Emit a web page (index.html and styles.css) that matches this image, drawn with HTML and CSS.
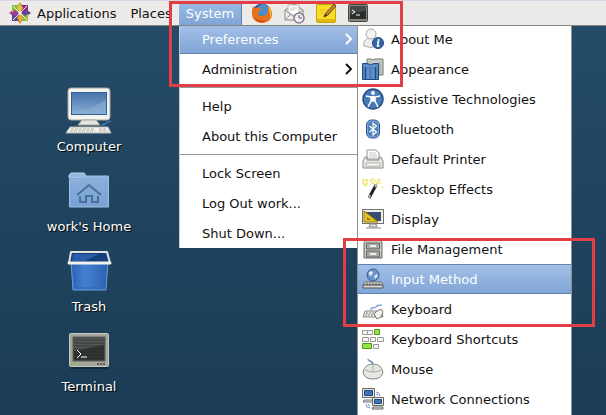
FILE: index.html
```
<!DOCTYPE html>
<html lang="en">
<head>
    <meta charset="UTF-8">
    <meta name="viewport" content="width=device-width, initial-scale=1.0">
    <title>Desktop</title>
    <link rel="stylesheet" href="styles.css">
</head>
<body>
    <div class="desktop">
        <header class="panel">
            <button type="button" class="panel-menu panel-apps">
                <svg class="icon" viewBox="0 0 22 22">
                    <path d="M11 0l3 4h-6z" fill="#c9a83a"/>
                    <path d="M22 11l-4 3v-6z" fill="#6c3f96"/>
                    <path d="M11 22l-3-4h6z" fill="#e0972e"/>
                    <path d="M0 11l4-3v6z" fill="#a84a9c"/>
                    <rect x="3" y="3" width="7" height="7" fill="#8fbf3a"/>
                    <rect x="12" y="3" width="7" height="7" fill="#8c2f85"/>
                    <rect x="3" y="12" width="7" height="7" fill="#5a4796"/>
                    <rect x="12" y="12" width="7" height="7" fill="#93b93d"/>
                    <path d="M11 2l3 4-3 4-3-4z" fill="#f3c13d"/>
                    <path d="M20 11l-4 3-4-3 4-3z" fill="#5b4699"/>
                    <path d="M11 20l-3-4 3-4 3 4z" fill="#f0a52c"/>
                    <path d="M2 11l4-3 4 3-4 3z" fill="#a63a92"/>
                    <path d="M4 4l14 14M18 4L4 18" stroke="#f3f1ee" stroke-width="1"/>
                </svg>
                Applications
            </button>
            <button type="button" class="panel-menu">Places</button>
            <button type="button" class="panel-menu open">System</button>
            <div class="launchers">
                <button type="button" class="launcher" aria-label="Web Browser">
                    <svg class="icon" viewBox="0 0 22 22">
                        <circle cx="11" cy="11" r="9.5" fill="#234f96"/>
                        <circle cx="12" cy="8" r="6" fill="#4b8ecb"/>
                        <path d="M2 4c1 1 1 2 2 2 1-1 3-1 4 0l2 1c0 2-2 2-3 3 0 3 2 4 5 4 3-1 5-2 5-6 0-2-1-3-2-4 4 1 6 4 6 8 0 5-4 9-10 9S1 17 1 12c0-3 0-5 1-8z" fill="#e8711c"/>
                        <path d="M17 4c4 3 4 8 2 12 0-4 0-8-2-12z" fill="#f9c536"/>
                        <path d="M3 14c2 4 7 6 12 4-3 3-10 3-12-4z" fill="#c4430f"/>
                    </svg>
                </button>
                <button type="button" class="launcher" aria-label="Mail">
                    <svg class="icon" viewBox="0 0 22 22">
                        <path d="M2 8l9-6 9 6v10H2z" fill="#eeeeec" stroke="#888a85"/>
                        <path d="M5 3h11v8l-5 4-6-4z" fill="#fff" stroke="#b5b6b1"/>
                        <path d="M7 6h7M7 8h5" stroke="#c5c6c1"/>
                        <path d="M2 8l9 6 9-6M2 18l6-6" fill="none" stroke="#999a95"/>
                        <circle cx="16" cy="16" r="5" fill="#f1eff3" stroke="#847b8c" stroke-width="1.5"/>
                        <path d="M16 13v3h3" fill="none" stroke="#6f477d"/>
                    </svg>
                </button>
                <button type="button" class="launcher" aria-label="Notes">
                    <svg class="icon" viewBox="0 0 22 22">
                        <rect x="1.500" y="2.500" width="19" height="18" rx="1" fill="#f7dc28" stroke="#c5a407"/>
                        <path d="M2 17h18v3H2z" fill="#dfb912"/>
                        <path d="M5 8h8M5 11h5" stroke="#e1be16"/>
                        <path d="M9 15l2-4 8-9 2 2-8 9z" fill="#c28439" stroke="#6d491b"/>
                        <path d="M9 15l1-3 2 1z" fill="#222"/>
                    </svg>
                </button>
                <button type="button" class="launcher" aria-label="Terminal">
                    <svg class="icon" viewBox="0 0 22 22">
                        <rect x="1.500" y="2.500" width="19" height="17" rx="1" fill="#85877f" stroke="#44463f"/>
                        <rect x="3" y="4" width="16" height="13" fill="#292d2c"/>
                        <path d="M3 4h16v5L3 12z" fill="#454a48"/>
                        <path d="M5 8l3 2-3 2M9 13h4" fill="none" stroke="#fff"/>
                    </svg>
                </button>
            </div>
        </header>

        <main class="shortcuts">
            <button type="button" class="shortcut">
                <svg class="icon-large" viewBox="0 0 48 48">
                    <path d="M6 1h36q3 0 3 3v26q0 3-3 3H6q-3 0-3-3V4q0-3 3-3z" fill="#f3f3ef" stroke="#a8a69c"/>
                    <rect x="6" y="5" width="36" height="23" fill="#315e97"/>
                    <rect x="7" y="6" width="34" height="21" fill="url(#screen)"/>
                    <path d="M7 24c14 0 24-4 34-12v15H7z" fill="#8db0d8" opacity=".5"/>
                    <path d="M17 33h14l4 5H13z" fill="#e5e5df" stroke="#aaa9a0"/>
                    <path d="M5 40h38l3 6H1z" fill="#f4f4f0" stroke="#b7b5ab"/>
                    <path d="M6 42h24M5 44h25M34 42h8M34 44h9" stroke="#aaa89f" stroke-dasharray="3 1"/>
                    <path d="M37 39c1-4 4-1 5-3s3-1 4-2" fill="none" stroke="#4378b1" stroke-width="1.500"/>
                    <defs>
                        <linearGradient id="screen" x1="0" y1="0" x2="0" y2="1">
                            <stop offset="0" stop-color="#4876ad"/>
                            <stop offset="1" stop-color="#89abd2"/>
                        </linearGradient>
                    </defs>
                </svg>
                <span>Computer</span>
            </button>
            <button type="button" class="shortcut">
                <svg class="icon-large" viewBox="0 0 48 48">
                    <path d="M4 8l2-2h13l4 5H4z" fill="#91b8e1" stroke="#b5d0ee"/>
                    <path d="M4.500 12h14l4-3h21v31h-39z" fill="url(#folder)" stroke="#a0c1e5"/>
                    <path d="M12 28l12-10 12 10M15 29v6h6v-6h6v6h6v-6" fill="none" stroke="#486f9d" stroke-width="2"/>
                    <defs>
                        <linearGradient id="folder" x1="0" y1="0" x2="0" y2="1">
                            <stop offset="0" stop-color="#8bb1dc"/>
                            <stop offset="1" stop-color="#78a2d2"/>
                        </linearGradient>
                    </defs>
                </svg>
                <span>work's Home</span>
            </button>
            <button type="button" class="shortcut">
                <svg class="icon-large" viewBox="0 0 48 48">
                    <path d="M6 15h37l-2 28H8z" fill="url(#bin)" stroke="#6f9cd6"/>
                    <path d="M6 5h36l3 11H4z" fill="#153e7d" stroke="#e3e4df" stroke-width="2" stroke-linejoin="round"/>
                    <path d="M8 7l-1 7h13l14-7z" fill="#2a5ca7"/>
                    <path d="M4 16h41" stroke="#f3f3ee" stroke-width="3" stroke-linecap="round"/>
                    <path d="M9 19l2 22h28l1-22" fill="none" stroke="#3365b5"/>
                    <defs>
                        <linearGradient id="bin" x1="0" y1="0" x2="1" y2="0">
                            <stop offset="0" stop-color="#2f67bb"/>
                            <stop offset=".4" stop-color="#447fce"/>
                            <stop offset="1" stop-color="#2b60b2"/>
                        </linearGradient>
                    </defs>
                </svg>
                <span>Trash</span>
            </button>
            <button type="button" class="shortcut">
                <svg class="icon-large" viewBox="0 0 48 48">
                    <path d="M5 41h38" stroke="#142b3d" stroke-width="2"/>
                    <rect x="4.500" y="6.500" width="39" height="33" rx="1" fill="#a4a59d" stroke="#c6c7bf"/>
                    <rect x="8" y="10" width="32" height="24" fill="#303533" stroke="#62655e"/>
                    <path d="M9 11h30v7L9 24z" fill="#515754"/>
                    <path d="M9 13h30M9 16h30M9 19h30M9 22h30M9 25h30M9 28h30M9 31h30" stroke="#252a28" opacity=".6"/>
                    <path d="M12 23l4 4-4 4M16 30h6" fill="none" stroke="#fff"/>
                    <path d="M8 37h3" stroke="#75c943" stroke-width="2"/>
                    <path d="M32 37h8" stroke="#5c5e57" stroke-width="2" stroke-dasharray="2 1"/>
                </svg>
                <span>Terminal</span>
            </button>
        </main>

        <nav class="menu system-menu" aria-label="System">
            <button type="button" class="menu-item selected">
                Preferences
                <svg class="arrow" viewBox="0 0 10 14"><path d="M2 2l5 5-5 5"/></svg>
            </button>
            <button type="button" class="menu-item">
                Administration
                <svg class="arrow" viewBox="0 0 10 14"><path d="M2 2l5 5-5 5"/></svg>
            </button>
            <hr>
            <button type="button" class="menu-item">Help</button>
            <button type="button" class="menu-item">About this Computer</button>
            <hr>
            <button type="button" class="menu-item">Lock Screen</button>
            <button type="button" class="menu-item">Log Out work...</button>
            <button type="button" class="menu-item">Shut Down...</button>
        </nav>

        <nav class="menu preferences-menu" aria-label="Preferences">
            <button type="button" class="menu-item">
                <svg class="icon" viewBox="0 0 22 22">
                    <path d="M2 18c-1-5 2-8 7-8s8 3 7 8q-7 3-14 0z" fill="#eeeeec" stroke="#aaaba7"/>
                    <circle cx="9" cy="6" r="5" fill="#f4f4f2" stroke="#aaaba7"/>
                    <circle cx="16" cy="15" r="5.500" fill="#3465a4" stroke="#204a87"/>
                    <circle cx="16.500" cy="12" r="1" fill="#fff"/>
                    <path d="M15 14h1.500l-1 4h2" fill="none" stroke="#fff" stroke-width="1.500"/>
                </svg>
                About Me
            </button>
            <button type="button" class="menu-item">
                <svg class="icon" viewBox="0 0 22 22">
                    <path d="M5 1h4q2 2 4 0h8v16H5z" fill="#c8cac5" stroke="#777973"/>
                    <path d="M8 4v10M18 4v12" stroke="#999b95"/>
                    <path d="M.5 5.500h5q3 3 6 0h5v16H.5z" fill="#4e80bd" stroke="#204a87"/>
                    <path d="M3.500 9v12M13.500 9v12" stroke="#204a87"/>
                    <path d="M6 10v11M11 10v11M1 8h15" stroke="#76a0d0"/>
                </svg>
                Appearance
            </button>
            <button type="button" class="menu-item">
                <svg class="icon" viewBox="0 0 22 22">
                    <circle cx="11" cy="11" r="10" fill="#4579b8" stroke="#274f88" stroke-width="1.500"/>
                    <circle cx="11" cy="5" r="2" fill="#fff"/>
                    <path d="M4 8l5 1v4l-3 6M18 8l-5 1v4l3 6M8 9h6M9 13h4" fill="none" stroke="#fff" stroke-width="1.500"/>
                    <path d="M9 8h4v5H9z" fill="#fff"/>
                </svg>
                Assistive Technologies
            </button>
            <button type="button" class="menu-item">
                <svg class="icon" viewBox="0 0 22 22">
                    <rect x="4.500" y="2" width="13" height="18" rx="5" fill="#4b80bb" stroke="#28578f"/>
                    <rect x="5.500" y="3" width="11" height="16" rx="4" fill="none" stroke="#83aad6"/>
                    <path d="M7.500 8l7 6-3.500 3V5l3.500 3-7 6" fill="none" stroke="#fff" stroke-width="1.200"/>
                </svg>
                Bluetooth
            </button>
            <button type="button" class="menu-item">
                <svg class="icon" viewBox="0 0 22 22">
                    <path d="M5 11V2h9l3 3v6z" fill="#fff" stroke="#959791"/>
                    <path d="M7 5h7M7 7h8M7 9h8" stroke="#c7c8c4"/>
                    <path d="M3 9h2v3h12V9h2l2 4v7H1v-7z" fill="#e8e9e5" stroke="#8a8c86"/>
                    <path d="M4 15h14v3H4z" fill="#fff" stroke="#aaaca6"/>
                </svg>
                Default Printer
            </button>
            <button type="button" class="menu-item">
                <svg class="icon" viewBox="0 0 22 22">
                    <path d="M1 2h4v4H1zM8 3l2-2 3 2-2 3zM15 2h4M15 5h4M16 1l-1 5M20 8l1 2M2 8l3-1" fill="none" stroke="#f1e878" stroke-width="1.500"/>
                    <path d="M7 20l7-13" stroke="#222" stroke-width="3"/>
                    <path d="M13 9l2-3M7 20l1-3" stroke="#b8b8b8" stroke-width="2"/>
                </svg>
                Desktop Effects
            </button>
            <button type="button" class="menu-item">
                <svg class="icon" viewBox="0 0 22 22">
                    <rect x=".5" y="1.500" width="21" height="14" fill="#eeeeec" stroke="#71736d"/>
                    <rect x="3" y="4" width="16" height="9" fill="#394d70"/>
                    <path d="M2 3l14 11H2z" fill="#e6c320" stroke="#9b7b08"/>
                    <path d="M5 9l4 3H5z" fill="#8d7218"/>
                    <path d="M8 16h6l1 3H7zM4 20h15" fill="#ddd" stroke="#8b8d86"/>
                </svg>
                Display
            </button>
            <button type="button" class="menu-item">
                <svg class="icon" viewBox="0 0 22 22">
                    <path d="M4 1h14l2 4v15H2V5z" fill="#c8cac4" stroke="#656760"/>
                    <path d="M4.500 5h13v6h-13zM4.500 13h13v6h-13z" fill="#a9aba4" stroke="#656760"/>
                    <path d="M8 8h6M8 16h6" stroke="#eee" stroke-width="2"/>
                </svg>
                File Management
            </button>
            <button type="button" class="menu-item selected">
                <svg class="icon" viewBox="0 0 22 22">
                    <circle cx="11" cy="7" r="6" fill="#6b95c8" stroke="#365d91"/>
                    <path d="M7 4l3-1 1 2-2 3-2-1zM12 8l3-2 1 2-3 3z" fill="#dce8f5"/>
                    <path d="M3 14h16l2 3H1z" fill="#e8e9e5" stroke="#666862"/>
                    <path d="M1 17h20v3H1z" fill="#d5d6d1" stroke="#555"/>
                    <path d="M4 16h14" stroke="#444" stroke-dasharray="2 1"/>
                </svg>
                Input Method
            </button>
            <button type="button" class="menu-item">
                <svg class="icon" viewBox="0 0 22 22">
                    <path d="M3 13h16l2 6H1z" fill="#e7e8e4" stroke="#888a84"/>
                    <path d="M4 15h10M3 17h11" stroke="#888a84" stroke-dasharray="2 1"/>
                    <path d="M9 12c0-4 4-1 5-3s3-2 6-2" fill="none" stroke="#86a9cf" stroke-width="1.500"/>
                    <path d="M12 16l3-3 4-2 2 3-2 5-4 2z" fill="#f3f2ef" stroke="#777"/>
                </svg>
                Keyboard
            </button>
            <button type="button" class="menu-item">
                <svg class="icon" viewBox="0 0 22 22">
                    <path d="M.5 2.500h10v4H.5zM5.500 2.500v4M.5 9.500h6v4h-6zM8.500 9.500h5v4h-5zM15.500 9.500h6v4h-6zM11.500 16.500h5v4h-5z" fill="#f5f5f3" stroke="#999b95"/>
                    <path d="M12.500 1.500h5v5h-5zM.5 15.500h9v5h-9z" fill="#95e34b" stroke="#4d9a13"/>
                </svg>
                Keyboard Shortcuts
            </button>
            <button type="button" class="menu-item">
                <svg class="icon" viewBox="0 0 22 22">
                    <path d="M6 1c0 3 5 1 5 6" fill="none" stroke="#7790ad" stroke-width="1.500"/>
                    <path d="M1 14q2-8 10-8t10 8q-1 7-10 7T1 14z" fill="#e6e7e4" stroke="#858781"/>
                    <path d="M3 12q8 4 16 0M11 6v7" fill="none" stroke="#a7a9a3"/>
                </svg>
                Mouse
            </button>
            <button type="button" class="menu-item">
                <svg class="icon" viewBox="0 0 22 22">
                    <path d="M.5.5h12v9H.5z" fill="#e6e7e3" stroke="#686a64"/>
                    <path d="M2.500 2.500h8v5h-8z" fill="#3f73b3" stroke="#204a87"/>
                    <path d="M2 12h10v2H1z" fill="#ddd" stroke="#777"/>
                    <path d="M10.500 9.500h11v8h-11z" fill="#e6e7e3" stroke="#686a64"/>
                    <path d="M12.500 11.500h7v4h-7z" fill="#3f73b3" stroke="#204a87"/>
                    <path d="M11 19h10v2H10z" fill="#ddd" stroke="#666"/>
                    <path d="M14 4q4 0 4 4M14 6q2 0 2 2M8 20q-4 0-4-4M8 18q-2 0-2-2" fill="none" stroke="#759dcb"/>
                </svg>
                Network Connections
            </button>
        </nav>

        <div class="highlight highlight-system"></div>
        <div class="highlight highlight-input"></div>
    </div>
</body>
</html>
```

FILE: styles.css
```
* {
    box-sizing: border-box;
}
body {
    margin: 0;
    font-family: "DejaVu Sans", sans-serif;
    font-size: 13px;
    line-height: 17px;
    color: #111;
}
button {
    margin: 0;
    padding: 0;
    border: none;
    background: none;
    font: inherit;
    color: inherit;
    white-space: nowrap;
    cursor: pointer;
}
.desktop {
    position: relative;
    height: 100vh;
    overflow: hidden;
    background: linear-gradient(#244c69, #1b3c56);
}

/* top panel */
.panel {
    position: relative;
    z-index: 2;
    display: flex;
    height: 26px;
    background: #edebea;
    border-top: 1px solid #d9d5e3;
    border-bottom: 1px solid #83867f;
}
.panel-menu {
    display: flex;
    align-items: center;
    gap: 6px;
    padding: 0 7px;
}
.panel-apps {
    padding-left: 9px;
}
.panel-menu.open {
    color: #fff;
    background: linear-gradient(#9bbbe4, #80a5d5);
    border-right: 1px solid #5d7fae;
}
.launchers {
    display: flex;
    align-items: center;
    gap: 10px;
    padding-left: 9px;
}
.launcher {
    display: flex;
}
.icon {
    flex: none;
    width: 22px;
    height: 22px;
}

/* desktop shortcuts */
.shortcuts {
    display: flex;
    flex-direction: column;
    align-items: flex-start;
    gap: 12px;
    padding: 61px 0 0 34px;
}
.shortcut {
    display: flex;
    flex-direction: column;
    align-items: center;
    gap: 3px;
    width: 110px;
    color: #fff;
    text-shadow: 1px 1px 1px #000;
}
.icon-large {
    width: 48px;
    height: 48px;
}

/* menus */
.menu {
    position: absolute;
    top: 24px;
    z-index: 1;
    background: #fff;
}
.system-menu {
    left: 179px;
    width: 178px;
    border-left: 1px solid #c9cbc7;
}
.preferences-menu {
    left: 357px;
    bottom: 0;
    width: 215px;
    overflow: hidden;
    border-left: 1px solid #8f918c;
    border-right: 1px solid #8f918c;
}
.menu-item {
    display: flex;
    align-items: center;
    justify-content: space-between;
    width: 100%;
    height: 30px;
    padding: 0 3px 0 22px;
}
.preferences-menu .menu-item {
    justify-content: flex-start;
    gap: 7px;
    padding: 0 4px;
}
.menu-item.selected {
    color: #fff;
    background: linear-gradient(#a4c0e7, #80a5d6);
    box-shadow: inset 0 1px #5f82b0, inset 0 -1px #5f82b0;
}
.menu hr {
    height: 1px;
    margin: 3px 0;
    border: none;
    background: #999;
}
.arrow {
    width: 10px;
    height: 14px;
    fill: none;
    stroke: currentColor;
    stroke-width: 2;
}

/* red frames */
.highlight {
    position: absolute;
    z-index: 3;
    border: 3px solid #e23f44;
    pointer-events: none;
}
.highlight-system {
    top: 1px;
    left: 169px;
    width: 234px;
    height: 86px;
}
.highlight-input {
    top: 238px;
    left: 343px;
    width: 252px;
    height: 89px;
}
```
